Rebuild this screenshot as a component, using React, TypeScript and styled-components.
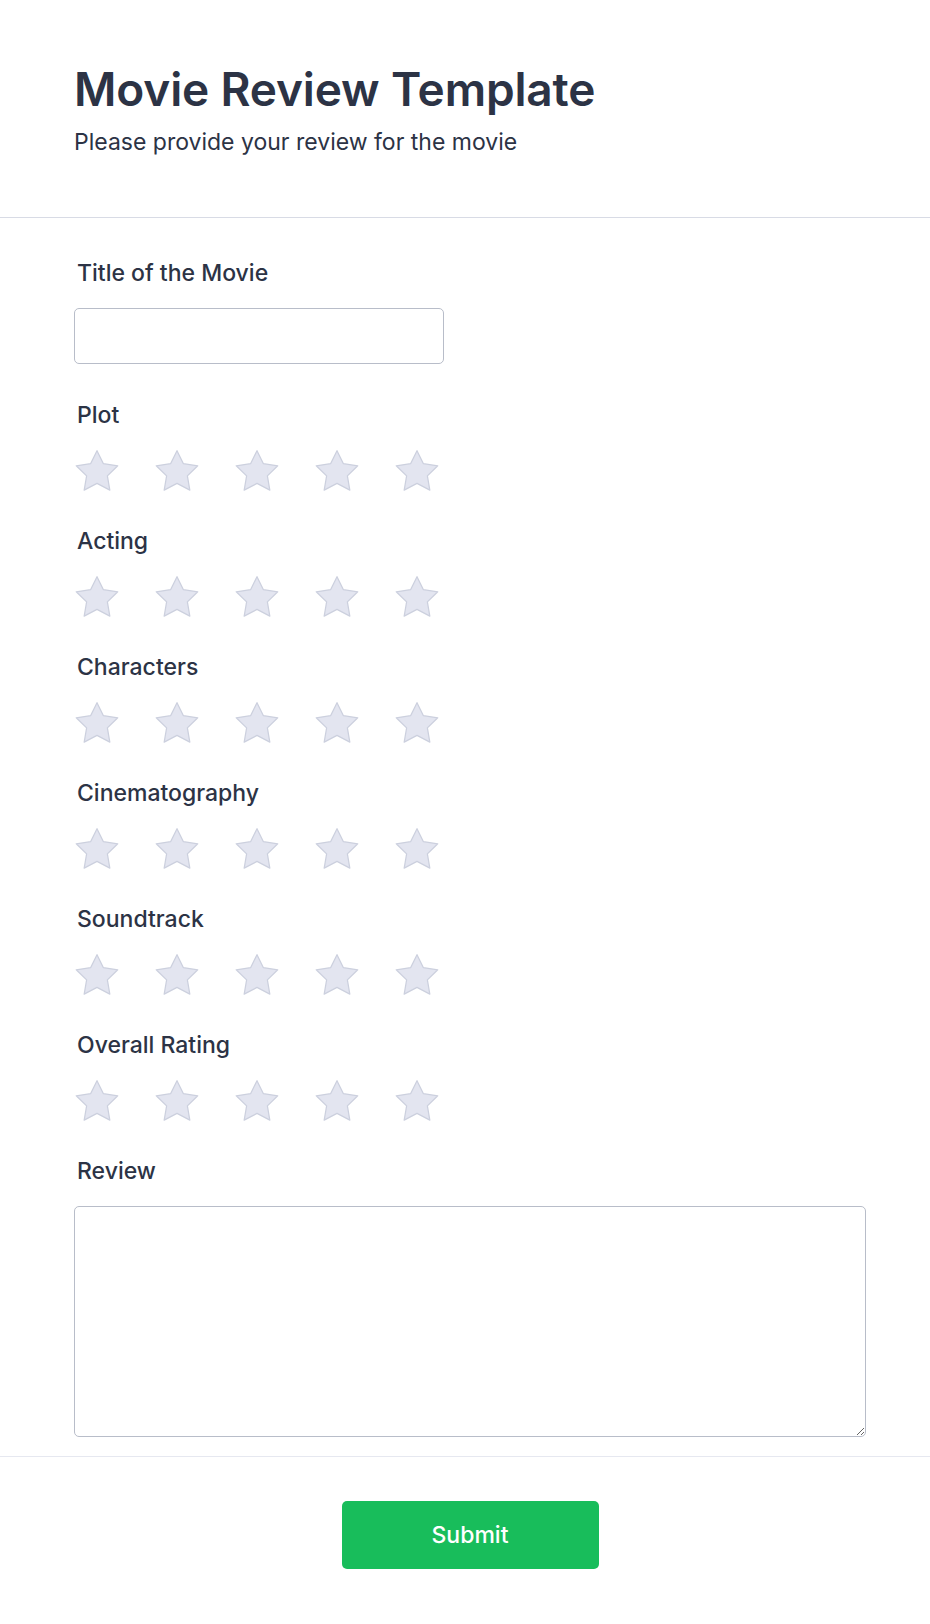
import React from "react";
import styled, { createGlobalStyle } from "styled-components";

const GlobalStyle = createGlobalStyle`
  html, body {
    margin: 0;
    padding: 0;
    background: #ffffff;
  }
  body {
    font-family: Inter, "Noto Sans", "Liberation Sans", sans-serif;
    color: #2c3345;
  }
  * { box-sizing: border-box; }
`;

const Page = styled.div`
  width: 930px;
  min-height: 1624px;
  background: #ffffff;
  display: flex;
  flex-direction: column;
`;

const Header = styled.header`
  padding: 62px 64px 59px 74px;
  border-bottom: 1px solid #d8dbe5;
  display: flex;
  flex-direction: column;
  gap: 9px;
`;

const Heading = styled.h1`
  margin: 0;
  font-size: 46px;
  line-height: 55px;
  font-weight: 600;
  color: #2c3345;
  letter-spacing: -0.15px;
`;

const Subtitle = styled.p`
  margin: 0;
  font-size: 23px;
  line-height: 32px;
  font-weight: 400;
  color: #2c3345;
`;

const Form = styled.form`
  padding: 39px 64px 19px 74px;
  border-bottom: 1px solid #e6e8f0;
  display: flex;
  flex-direction: column;
  gap: 35px;
`;

const Field = styled.div`
  display: flex;
  flex-direction: column;
  gap: 19px;
`;

const Label = styled.label`
  padding-left: 3px;
  font-size: 23px;
  line-height: 32px;
  font-weight: 500;
  color: #2c3345;
`;

const TextInput = styled.input`
  width: 370px;
  height: 56px;
  border: 1px solid #b8bdc9;
  border-radius: 5px;
  padding: 0 12px;
  font: inherit;
  font-size: 18px;
  outline: none;
  background: #fff;
`;

const TextArea = styled.textarea`
  width: 792px;
  height: 231px;
  border: 1px solid #b8bdc9;
  border-radius: 5px;
  padding: 12px;
  font: inherit;
  font-size: 18px;
  outline: none;
  resize: vertical;
  display: block;
`;

const Stars = styled.div`
  display: flex;
  gap: 36px;
  height: 40px;
  align-items: center;
  padding-left: 1px;
`;

const StarButton = styled.button`
  border: 0;
  padding: 0;
  margin: 0;
  background: transparent;
  width: 44px;
  height: 40px;
  cursor: pointer;
  display: flex;
  align-items: center;
  justify-content: center;
`;

const Footer = styled.div`
  display: flex;
  justify-content: center;
  padding: 44px 64px 57px 74px;
`;

const SubmitButton = styled.button`
  width: 257px;
  height: 68px;
  border: 0;
  border-radius: 5px;
  background: #18bd5b;
  color: #ffffff;
  font-family: Inter, "Noto Sans", sans-serif;
  font-size: 23px;
  font-weight: 500;
  cursor: pointer;
`;

const Star = () => (
  <svg width="45" height="43" viewBox="1.4 1.4 21.2 20.3" aria-hidden="true">
    <polygon
      points="12 2 15.09 8.26 22 9.27 17 14.14 18.18 21.02 12 17.77 5.82 21.02 7 14.14 2 9.27 8.91 8.26"
      fill="#e3e5f0"
      stroke="#ccd0de"
      strokeWidth="0.6"
      strokeLinejoin="round"
    />
  </svg>
);

const ratings = [
  "Plot",
  "Acting",
  "Characters",
  "Cinematography",
  "Soundtrack",
  "Overall Rating",
];

const RatingField = ({ label }: { label: string }) => (
  <Field>
    <Label>{label}</Label>
    <Stars>
      {[1, 2, 3, 4, 5].map((n) => (
        <StarButton key={n} type="button" aria-label={`${n} star`}>
          <Star />
        </StarButton>
      ))}
    </Stars>
  </Field>
);

export default function App() {
  return (
    <Page>
      <GlobalStyle />
      <Header>
        <Heading>Movie Review Template</Heading>
        <Subtitle>Please provide your review for the movie</Subtitle>
      </Header>
      <Form onSubmit={(e) => e.preventDefault()}>
        <Field>
          <Label>Title of the Movie</Label>
          <TextInput type="text" />
        </Field>
        {ratings.map((r) => (
          <RatingField key={r} label={r} />
        ))}
        <Field>
          <Label>Review</Label>
          <TextArea />
        </Field>
      </Form>
      <Footer>
        <SubmitButton type="button">Submit</SubmitButton>
      </Footer>
    </Page>
  );
}
